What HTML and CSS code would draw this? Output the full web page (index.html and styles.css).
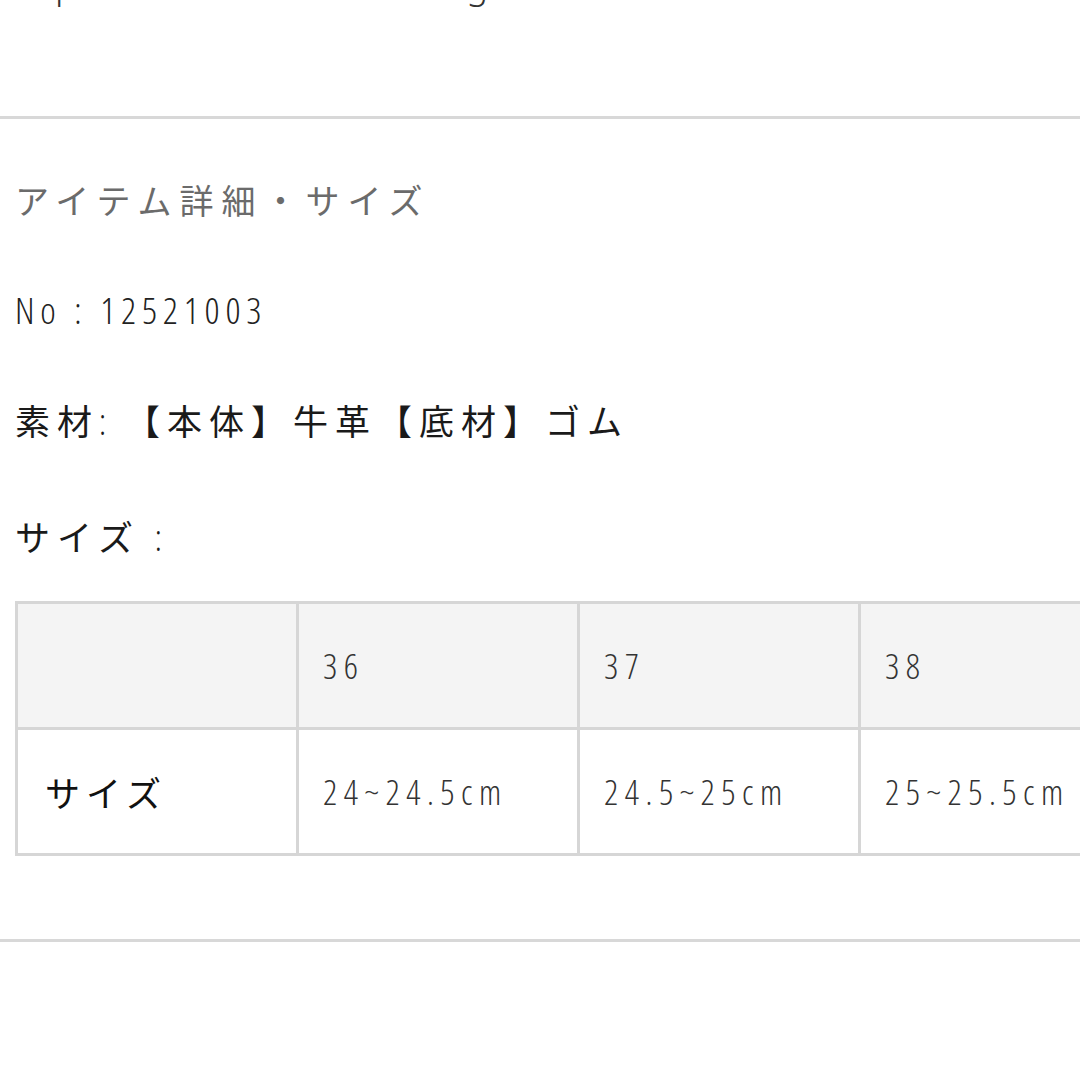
FILE: index.html
```html
<!DOCTYPE html>
<html lang="ja">
<head>
<meta charset="utf-8">
<link rel="stylesheet" href="styles.css">
</head>
<body>
<div class="page">
  <p class="cut"><span class="cut-p">p</span><span class="cut-g">g</span></p>
  <hr class="rule rule-top">
  <section class="detail">
    <h2 class="title">アイテム詳細・サイズ</h2>
    <p class="line num">No : 12521003</p>
    <p class="line jp">素材<span class="num colon">:</span> 【本体】牛革【底材】ゴム</p>
    <p class="line jp">サイズ <span class="num">:</span></p>
    <div class="table-wrap">
      <table class="size-table">
        <tr class="head">
          <td></td>
          <td class="num">36</td>
          <td class="num">37</td>
          <td class="num">38</td>
          <td class="num">39</td>
        </tr>
        <tr class="body">
          <td class="jp label">サイズ</td>
          <td class="num">24~24.5cm</td>
          <td class="num">24.5~25cm</td>
          <td class="num">25~25.5cm</td>
          <td class="num">25.5~26cm</td>
        </tr>
      </table>
    </div>
  </section>
  <hr class="rule rule-bottom">
</div>
</body>
</html>
```
FILE: styles.css
```css
html, body {
  margin: 0;
  padding: 0;
  background: #ffffff;
}
body {
  width: 1080px;
  height: 1080px;
  overflow: hidden;
  font-family: "Noto Sans CJK JP", "Noto Sans", sans-serif;
  color: #1a1a1a;
}
.page {
  display: flex;
  flex-direction: column;
}
.num {
  font-family: "Open Sans", "Noto Sans", "Noto Sans CJK JP", sans-serif;
  font-stretch: 75%;
  font-weight: 300;
  letter-spacing: 6.5px;
}
.cut {
  margin: -40px 0 0 0;
  height: 50px;
  font-family: "Noto Sans", sans-serif;
  font-weight: 300;
  font-size: 36px;
  line-height: 50px;
  color: #333;
  display: flex;
}
.cut-p { margin-left: 55px; }
.cut-g { margin-left: 390px; }
.rule {
  border: 0;
  height: 3px;
  background: #d8d8d8;
  margin: 0;
  width: 100%;
}
.rule-top { margin-top: 106px; }
.detail {
  padding: 0 0 0 15px;
  display: flex;
  flex-direction: column;
}
.title {
  margin: 59px 0 0 0;
  font-size: 34px;
  font-weight: 400;
  line-height: 44px;
  letter-spacing: 8px;
  color: #6b6b6b;
}
.line {
  margin: 0;
  font-size: 34px;
  line-height: 44px;
  color: #1a1a1a;
}
.line.num {
  margin-top: 66px;
  font-size: 37px;
  letter-spacing: 5.8px;
  color: #222;
}
.line.jp {
  margin-top: 66px;
  font-size: 35px;
  letter-spacing: 7px;
}
.line.jp + .line.jp { margin-top: 70px; }
.line.jp .num { font-size: 36px; letter-spacing: 0; }
.line.jp .colon { margin-right: 4px; }
.table-wrap {
  margin-top: 41px;
  width: 1065px;
  overflow: hidden;
}
.size-table {
  border-collapse: collapse;
  table-layout: fixed;
  width: 1408px;
}
.size-table td {
  border: 3px solid #d6d6d6;
  width: 275px;
  height: 126px;
  padding: 0 0 0 24px;
  vertical-align: middle;
  box-sizing: border-box;
  font-size: 35px;
  color: #333;
}
.size-table .head td {
  background: #f4f4f4;
}
.size-table td.label {
  padding-left: 27px;
  font-size: 35px;
  letter-spacing: 6px;
  color: #111;
}
.rule-bottom { margin-top: 83px; }
```
